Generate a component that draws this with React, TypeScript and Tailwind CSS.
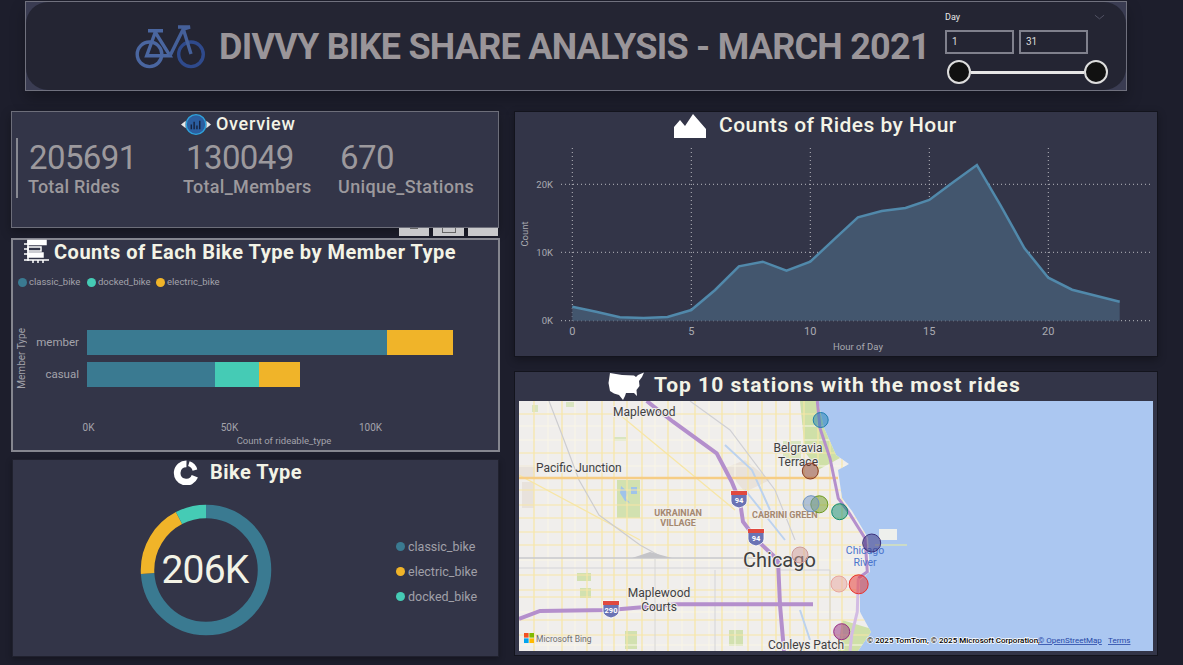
import React from "react";

const hourly = [605, 620, 637, 639, 636, 615, 555, 484, 470, 497, 470, 403, 337, 318, 309, 285, 232, 180, 302, 430, 518, 554, 572, 590];
const pts = hourly.map((v, i) => `${(572.3 + i * 23.8).toFixed(1)},${(105 + v / 3).toFixed(1)}`);
const linePts = pts.join(" ");
const areaPts = `572.3,320.7 ${linePts} ${(572.3 + 23 * 23.8).toFixed(1)},320.7`;

const vMajor = [534, 562, 587, 602, 614, 627, 642, 668, 695, 722, 748, 762, 776, 790, 804, 818, 830, 842];
const hMajor = [414, 453, 505, 518, 532, 545, 575, 590, 597, 620, 635, 490];
const vMinor = [548, 575, 655, 682, 709, 735];
const hMinor = [426, 440, 466, 560, 612, 645];

const circles = [
  { x: 820.7, y: 420, r: 7.5, c: "#1f7fb0" },
  { x: 810.3, y: 471, r: 8, c: "#8a3b24" },
  { x: 819.3, y: 504.3, r: 8.5, c: "#6d9a1f" },
  { x: 811, y: 503.7, r: 8, c: "#6f94c4" },
  { x: 839.7, y: 511.7, r: 8, c: "#0d8a6c" },
  { x: 871.7, y: 543, r: 9, c: "#3a2f7a" },
  { x: 800, y: 555, r: 8, c: "#cf9c98" },
  { x: 839, y: 584, r: 8, c: "#e8a69e" },
  { x: 858.7, y: 584.3, r: 9.5, c: "#e8322c" },
  { x: 841.7, y: 631.7, r: 8, c: "#972d82" },
];

function Shield({ x, y, t }: { x: number; y: number; t: string }) {
  return (
    <g>
      <path d={`M${x - 8} ${y - 8}H${x + 8}V${y + 2}Q${x + 8} ${y + 7} ${x} ${y + 9}Q${x - 8} ${y + 7} ${x - 8} ${y + 2}Z`} fill="#6a73b4" stroke="#fff" strokeWidth="0.8" />
      <rect x={x - 8} y={y - 8} width="16" height="4" fill="#e0493f" />
      <text x={x} y={y + 4} textAnchor="middle" fontSize="7.5" fontWeight="700" fill="#fff">{t}</text>
    </g>
  );
}

const land = "M519 401H818L824 428L836 455L849 464L838 470L842 498L852 511L868 538L870 572L860 580L860 612L871 632L858 651H519Z";

function MapArt() {
  return (
    <svg viewBox="519 401 634 250" className="block w-[634px] h-[250px] font-['Roboto',sans-serif]">
      <defs>
        <clipPath id="landClip"><path d={land} /></clipPath>
      </defs>
      <rect x="519" y="401" width="634" height="250" fill="#abc7f1" />
      <path d={land} fill="#f0eeec" />
      <g clipPath="url(#landClip)">
        <path d="M800 401H822L828 430L840 458L818 470L805 452Z" fill="#cfe0a8" />
        <path d="M842 620L875 630L858 651H838Z" fill="#cfe0a8" />
        <rect x="617" y="480" width="23" height="38" fill="#d2e1b0" />
        <path d="M621 486L628 492L626 498L630 503L625 501L620 493Z" fill="#9fc3ea" />
        <rect x="631" y="487" width="6" height="7" fill="#9fc3ea" />
        <rect x="577" y="573" width="14" height="8" fill="#d2e1b0" />
        <rect x="580" y="588" width="11" height="10" fill="#d2e1b0" />
        <rect x="625" y="631" width="12" height="18" fill="#d2e1b0" />
        <rect x="729" y="630" width="14" height="16" fill="#d2e1b0" />
        <rect x="532" y="405" width="6" height="7" fill="#d9e5c0" />
        <rect x="566" y="402" width="8" height="5" fill="#d9e5c0" />
        <rect x="614" y="437" width="12" height="4" fill="#d9e5c0" />
        <rect x="783" y="441" width="18" height="18" fill="#d9e5c0" />
        <rect x="519" y="465" width="16" height="12" fill="#e8e2dc" />
        <rect x="522" y="482" width="12" height="26" fill="#e8e2dc" />
        <path d="M725 468L745 460L770 480L745 492Z" fill="#e9e2da" />
        {hMinor.map((y) => <line key={y} x1="519" x2="870" y1={y} y2={y} stroke="#faf6e6" strokeWidth="1" />)}
        {vMinor.map((x) => <line key={x} x1={x} x2={x} y1="401" y2="651" stroke="#faf6e6" strokeWidth="1" />)}
        {hMajor.map((y) => <line key={y} x1="519" x2="870" y1={y} y2={y} stroke="#f7e6a6" strokeWidth="1.2" />)}
        {vMajor.map((x) => <line key={x} x1={x} x2={x} y1="401" y2="651" stroke="#f7e6a6" strokeWidth="1.2" />)}
        <path d="M519 475L640 540M620 415L735 510" stroke="#f7e6a6" strokeWidth="1.3" fill="none" />
        <path d="M549 401L564 440L579 480L599 515L640 545L660 556" fill="none" stroke="#cdcdd0" strokeWidth="1.2" />
        <path d="M519 558H770" stroke="#c9c9cc" strokeWidth="1.3" fill="none" />
        <path d="M519 568H750M655 555V651M715 570V651M780 570H830V620" stroke="#d4d4d8" strokeWidth="1" fill="none" />
        <path d="M632 558L650 552L672 558Z" fill="#c4c4c8" />
        <path d="M690 401L730 430L775 490L795 540" stroke="#d0d0d4" strokeWidth="1.2" fill="none" />
        <path d="M725 445L752 470L770 510M745 490L785 540M800 610L810 640" stroke="#bcd2ee" strokeWidth="2" fill="none" />
        <path d="M519 478H838" stroke="#f6cd85" strokeWidth="2.5" />
      </g>
      <path d="M646.7 401L673 421.7L716.7 453.3L731.7 481.7L740 501.7L743 521.7L756.7 540L778 560L780 605L784 651" fill="none" stroke="#b48fcc" strokeWidth="4" />
      <path d="M519 619L540 611L610 610L676.7 604.3H813" fill="none" stroke="#b48fcc" strokeWidth="4" />
      <path d="M817.3 401L820 428.3L830 458.3L838.3 498.3L848.3 511.7L865 538.3L867.3 571.7L858.3 578.3" fill="none" stroke="#b48fcc" strokeWidth="3" />
      <path d="M858.3 578.3L857.3 611.7L851.7 635L850 651" fill="none" stroke="#d3bce3" strokeWidth="3" />
      <rect x="879" y="529" width="18" height="11" fill="#eef0ec" />
      <path d="M875 545H907" stroke="#d6e2b8" strokeWidth="1.5" />
      <Shield x={739} y={499} t="94" />
      <Shield x={756} y={537} t="94" />
      <Shield x={611} y={609} t="290" />
      <g fill="#3f3f3f" fontSize="12" stroke="#f0eeec" strokeWidth="2" paintOrder="stroke">
        <text x="613" y="416">Maplewood</text>
        <text x="798" y="452" textAnchor="middle">Belgravia</text>
        <text x="798" y="466" textAnchor="middle">Terrace</text>
        <text x="536" y="472">Pacific Junction</text>
        <text x="659" y="597" textAnchor="middle">Maplewood</text>
        <text x="659" y="611" textAnchor="middle">Courts</text>
        <text x="768" y="649">Conleys Patch</text>
        <text x="743" y="567" fontSize="20">Chicago</text>
      </g>
      <g fill="#a5886f" fontSize="9" fontWeight="700" stroke="#f0eeec" strokeWidth="1.5" paintOrder="stroke">
        <text x="678" y="516" textAnchor="middle">UKRAINIAN</text>
        <text x="678" y="526" textAnchor="middle">VILLAGE</text>
        <text x="752" y="518">CABRINI GREEN</text>
      </g>
      <g fill="#4a74cc" fontSize="10.5">
        <text x="865" y="554" textAnchor="middle">Chicago</text>
        <text x="865" y="566" textAnchor="middle">River</text>
      </g>
      {circles.map((c) => (
        <circle key={c.x} cx={c.x} cy={c.y} r={c.r} fill={c.c} fillOpacity="0.5" stroke={c.c} strokeWidth="1" />
      ))}
      <rect x="524" y="633" width="4.6" height="4.6" fill="#f25022" />
      <rect x="529.4" y="633" width="4.6" height="4.6" fill="#7fba00" />
      <rect x="524" y="638.4" width="4.6" height="4.6" fill="#00a4ef" />
      <rect x="529.4" y="638.4" width="4.6" height="4.6" fill="#ffb900" />
      <text x="536" y="642" fontSize="8.5" fill="#707070">Microsoft Bing</text>
      <text x="867" y="643" fontSize="8" fontWeight="500" fill="#000" stroke="#fff" strokeWidth="1.5" paintOrder="stroke">© 2025 TomTom, © 2025 Microsoft Corporation,</text>
      <text x="1038" y="643" fontSize="8" fill="#2748a8" textDecoration="underline">© OpenStreetMap</text>
      <text x="1108" y="643" fontSize="8" fill="#2748a8" textDecoration="underline">Terms</text>
    </svg>
  );
}

function Dot({ c }: { c: string }) {
  return <span className="block w-[9px] h-[9px] rounded-full shrink-0" style={{ backgroundColor: c }} />;
}

export default function App() {
  return (
    <div className="w-[1183px] h-[665px] overflow-hidden bg-[#1d1e2c] pt-px font-['Roboto',sans-serif]">
      {/* Header */}
      <div className="ml-[25px] w-[1102px] h-[90px] border border-[#70717e] bg-[#3a3c52] shadow-[0_8px_14px_rgba(0,0,0,0.25)]">
        <div className="relative w-full h-full rounded-[22px] bg-[#242533] flex items-center">
          <svg viewBox="135 25 70 44" className="ml-[109px] self-start mt-[23px] w-[70px] h-[44px] shrink-0" fill="none" strokeWidth="3.4">
            <circle cx="149.5" cy="54.3" r="12.3" stroke="#4a66a0" />
            <circle cx="191" cy="54.3" r="12.3" stroke="#2f4a8c" />
            <path d="M148 30.7H163M155.7 31L146.7 55.7H170L155.7 33" stroke="#4a66a0" strokeLinejoin="miter" />
            <path d="M170 55.7L183.3 29M178 27H190L183.3 29L191 54" stroke="#45609a" />
          </svg>
          <div className="ml-[14px] w-[709px] text-[36px] font-bold tracking-[-0.76px] text-[#9a9599] whitespace-nowrap leading-none mt-[1px]">DIVVY BIKE SHARE ANALYSIS - MARCH 2021</div>
          <div className="ml-[17px] w-[165px] shrink-0 self-start pt-[10px]">
            <div className="text-[9px] leading-[11px] text-[#e8e8e8]">Day</div>
            <div className="mt-[7px] flex gap-[5px]">
              <div className="w-[69px] h-[24px] border-2 border-[#80818d] text-[10px] leading-[20px] pl-[5px] text-[#dcdcdc]">1</div>
              <div className="w-[69px] h-[24px] border-2 border-[#80818d] text-[10px] leading-[20px] pl-[5px] text-[#dcdcdc]">31</div>
            </div>
            <div className="mt-[6px] flex items-center pl-[2px]">
              <div className="w-[24px] h-[24px] rounded-full bg-[#111] border-2 border-[#ddd] shrink-0" />
              <div className="w-[113px] h-[3px] bg-[#e6e6e6] shrink-0" />
              <div className="w-[24px] h-[24px] rounded-full bg-[#111] border-2 border-[#ddd] shrink-0" />
            </div>
          </div>
          <svg viewBox="0 0 12 6" className="absolute left-[1068px] top-[12px] w-[11px] h-[6px]" fill="none" stroke="#555768"><path d="M1 1L6 5L11 1" /></svg>
        </div>
      </div>

      <div className="mt-[20px] ml-[11px] flex">
        {/* Left column */}
        <div className="w-[489px] shrink-0">
          <div className="w-[488px] h-[117px] bg-[#333548] border border-[#6d6e7a] shadow-[0_4px_10px_rgba(0,0,0,0.3)]">
            <div className="flex items-center h-[24px] pl-[169px]">
              <svg viewBox="0 0 32 24" className="w-[30px] h-[23px] shrink-0">
                <path d="M0 12L5 8V16ZM32 12L27 8V16Z" fill="#e8e8e8" />
                <circle cx="16" cy="12" r="10.5" fill="#2b5ea0" stroke="#2fa2dc" strokeWidth="1.5" />
                <path d="M11 17V12M14 17V9M17 17V13M20 17V8" stroke="#16233f" strokeWidth="1.5" />
              </svg>
              <span className="ml-[5px] text-[18px] font-medium text-[#f3f3e6] leading-none tracking-[0.7px]">Overview</span>
            </div>
            <div className="mt-[2px] ml-[4px] h-[60px] border-l-2 border-[#888992] flex pl-[10px] text-[#9c999d]">
              <div className="w-[155px]">
                <div className="mt-px text-[33px] leading-[37px] tracking-[-0.6px] pl-[1px]">205691</div>
                <div className="text-[18px] leading-[22px] font-medium tracking-[0.2px]">Total Rides</div>
              </div>
              <div className="w-[155px]">
                <div className="mt-px text-[33px] leading-[37px] tracking-[-0.6px] pl-[3px]">130049</div>
                <div className="text-[18px] leading-[22px] font-medium tracking-[0.3px]">Total_Members</div>
              </div>
              <div>
                <div className="mt-px text-[33px] leading-[37px] tracking-[-0.6px] pl-[2px]">670</div>
                <div className="text-[18px] leading-[22px] font-medium tracking-[0.35px] whitespace-nowrap">Unique_Stations</div>
              </div>
            </div>
          </div>
          <div className="w-[488px] h-[8px] flex justify-end gap-[4px] pr-px text-[#555]">
            <div className="w-[30px] h-[8px] bg-[#c9c9cb] flex justify-center"><span className="block w-[8px] h-[1px] bg-[#666]" /></div>
            <div className="w-[31px] h-[8px] bg-[#c9c9cb] flex justify-center"><span className="block w-[14px] h-[5px] border-x border-b border-[#666]" /></div>
            <div className="w-[30px] h-[8px] bg-[#c9c9cb]" />
          </div>

          {/* Bar chart */}
          <div className="mt-[2px] w-[489px] h-[214px] bg-[#333548] border-2 border-[#85868f]">
            <div className="flex items-center h-[25px] pl-[10px] mt-[-1px]">
              <svg viewBox="0 0 26 25" className="w-[26px] h-[25px] shrink-0" fill="none" stroke="#fff" strokeWidth="1.5">
                <path d="M5 1V22M1 21H26M1 5H5M1 10H5M1 15H5M10 21V24M15 21V24M20 21V24" />
                <rect x="5" y="1.5" width="18" height="4" fill="#fff" />
                <rect x="5" y="8" width="13" height="4" />
                <rect x="5" y="14" width="15" height="4" fill="#fff" />
              </svg>
              <span className="ml-[5px] text-[20px] font-bold text-[#f3f3e6] whitespace-nowrap tracking-[0.5px] leading-none">Counts of Each Bike Type by Member Type</span>
            </div>
            <div className="mt-[12px] h-[12px] flex items-center pl-[5px] text-[9.5px] text-[#a3a3ab] leading-none">
              <Dot c="#3a7a91" /><span className="ml-[2px] w-[58px]">classic_bike</span>
              <Dot c="#45cbb5" /><span className="ml-[2px] w-[58px]">docked_bike</span>
              <Dot c="#f0b429" /><span className="ml-[2px]">electric_bike</span>
            </div>
            <div className="mt-[42px] flex h-[57px] items-center">
              <div className="w-[18px] flex justify-center">
                <span className="[writing-mode:vertical-rl] rotate-180 text-[10px] leading-[12px] text-[#a3a3ab] whitespace-nowrap">Member Type</span>
              </div>
              <div className="flex flex-col gap-[7px]">
                <div className="flex h-[25px] items-center">
                  <div className="w-[48px] text-right text-[11.5px] text-[#a3a3ab] mr-[8px]">member</div>
                  <div className="w-[300px] h-full bg-[#3a7a91]" />
                  <div className="w-[66px] h-full bg-[#f0b429]" />
                </div>
                <div className="flex h-[25px] items-center">
                  <div className="w-[48px] text-right text-[11.5px] text-[#a3a3ab] mr-[8px]">casual</div>
                  <div className="w-[128px] h-full bg-[#3a7a91]" />
                  <div className="w-[44px] h-full bg-[#45cbb5]" />
                  <div className="w-[41px] h-full bg-[#f0b429]" />
                </div>
              </div>
            </div>
            <div className="mt-[35px] ml-[5px] flex text-[10px] leading-[12px] text-[#a3a3ab]">
              <span className="w-[141px] text-center">0K</span>
              <span className="w-[141px] text-center">50K</span>
              <span className="w-[141px] text-center">100K</span>
            </div>
            <div className="mt-px ml-[171px] w-[200px] text-center text-[9.5px] leading-[12px] text-[#a3a3ab]">Count of rideable_type</div>
          </div>

          {/* Donut */}
          <div className="mt-[7px] ml-px w-[487px] h-[198px] bg-[#333548] border border-[#20212e] shadow-[0_2px_6px_rgba(0,0,0,0.3)]">
            <div className="flex items-center h-[24px] pl-[160px]">
              <svg viewBox="0 0 26 26" className="w-[25px] h-[25px] shrink-0" fill="none" stroke="#fff" strokeWidth="7">
                <path d="M14 4A9.5 9.5 0 1 0 22.7 17" />
                <path d="M16.5 3.8A9.5 9.5 0 0 1 22.8 10.5" strokeWidth="5" />
              </svg>
              <span className="ml-[12px] text-[20px] font-bold text-[#f3f3e6] tracking-[0.5px] leading-none">Bike Type</span>
            </div>
            <div className="flex">
              <div className="relative ml-[127px] mt-[20px] w-[132px] h-[132px] shrink-0 flex items-center justify-center">
                <svg viewBox="0 0 132 132" className="absolute inset-0 w-[132px] h-[132px] -rotate-90" fill="none" strokeWidth="13.5">
                  <circle cx="66" cy="66" r="58.5" stroke="#3a7a91" pathLength="360" strokeDasharray="266.5 360" />
                  <circle cx="66" cy="66" r="58.5" stroke="#f0b429" pathLength="360" strokeDasharray="66 360" strokeDashoffset="-266.5" />
                  <circle cx="66" cy="66" r="58.5" stroke="#45cbb5" pathLength="360" strokeDasharray="27.5 360" strokeDashoffset="-332.5" />
                </svg>
                <span className="relative text-[39px] leading-none text-[#f3f3e6] tracking-[-0.8px] mr-[2px]">206K</span>
              </div>
              <div className="ml-[124px] mt-[54px] flex flex-col gap-[8px] text-[12.5px] leading-[17px] text-[#a0a0a8]">
                <div className="flex items-center gap-[3px]"><Dot c="#3a7a91" />classic_bike</div>
                <div className="flex items-center gap-[3px]"><Dot c="#f0b429" />electric_bike</div>
                <div className="flex items-center gap-[3px]"><Dot c="#45cbb5" />docked_bike</div>
              </div>
            </div>
          </div>
        </div>

        {/* Right column */}
        <div className="ml-[14px] w-[644px] shrink-0">
          <div className="h-[246px] bg-[#333548] border border-[#13141d] shadow-[0_3px_8px_rgba(0,0,0,0.3)]">
            <div className="flex items-center h-[28px] pl-[159px]">
              <svg viewBox="0 0 32 24" className="w-[32px] h-[24px] shrink-0" fill="#fff">
                <path d="M0 24V13L6 6L11 12L19 0L32 15V24Z" />
              </svg>
              <span className="ml-[13px] mt-[-1px] text-[21px] font-medium text-[#f3f3e6] leading-none tracking-[0.45px]">Counts of Rides by Hour</span>
            </div>
            <svg viewBox="515 140 642 216" className="block w-[642px] h-[216px]">
              <g stroke="#b9bac0" strokeWidth="1" strokeDasharray="1 3">
                {[572.3, 691.3, 810.3, 929.3, 1048.3].map((x) => <line key={x} x1={x} x2={x} y1="148" y2="321" />)}
                {[184.3, 252.3, 320.7].map((y) => <line key={y} x1="561" x2="1153" y1={y} y2={y} />)}
              </g>
              <polygon points={areaPts} fill="#43566e" />
              <polyline points={linePts} fill="none" stroke="#5189ab" strokeWidth="2.5" />
              <g fill="#a9aab1" fontSize="9.5" textAnchor="end">
                <text x="553" y="188">20K</text>
                <text x="553" y="256">10K</text>
                <text x="553" y="324">0K</text>
              </g>
              <g fill="#a9aab1" fontSize="11" textAnchor="middle">
                {[0, 5, 10, 15, 20].map((h) => <text key={h} x={572.3 + h * 23.8} y="335">{h}</text>)}
                <text x="858" y="350" fontSize="9.5">Hour of Day</text>
                <text transform="translate(528 234) rotate(-90)" fontSize="9.5">Count</text>
              </g>
            </svg>
          </div>
          <div className="mt-[14px] h-[285px] bg-[#333548] border border-[#13141d] px-[4px]">
            <div className="flex items-center h-[29px] pl-[89px]">
              <svg viewBox="0 0 36 28" className="w-[36px] h-[28px] shrink-0 mt-[-2px]" fill="#fff">
                <path d="M2 1L14 3L26 3.5L28 5L30 3L36 0.5L34 5L31 9L31.5 14L28.5 18L29 24L26 21L18 21L17 24L15 28L11 23L6 21.5L2 19L0.5 11Z" />
              </svg>
              <span className="ml-[10px] mt-[-2px] text-[21px] font-bold text-[#f3f3e6] tracking-[1px] leading-none whitespace-nowrap">Top 10 stations with the most rides</span>
            </div>
            <MapArt />
          </div>
        </div>
      </div>
    </div>
  );
}
